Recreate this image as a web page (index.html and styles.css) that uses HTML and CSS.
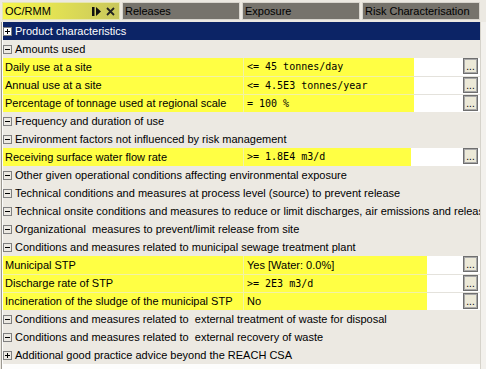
FILE: index.html
```html
<!doctype html>
<html lang="en">
<head>
    <meta charset="UTF-8">
    <title>OC/RMM</title>
    <link rel="stylesheet" href="styles.css">
</head>
<body>

<div class="tabs">
    <div class="tab active">
        <span>OC/RMM</span>
        <svg class="tab-icons" width="23" height="9" viewBox="0 0 23 9">
            <rect x="0" y="0" width="2.5" height="9" fill="#111"/>
            <path d="M4 0 L9 4.5 L4 9 Z" fill="#111"/>
            <path d="M15 1 L22 8 M22 1 L15 8" stroke="#222" stroke-width="1.8"/>
        </svg>
    </div>
    <div class="tab">Releases</div>
    <div class="tab">Exposure</div>
    <div class="tab">Risk Characterisation</div>
</div>

<div class="frame">
    <div class="tree">
        <div class="node head">
            <svg class="box" width="9" height="9" viewBox="0 0 9 9"><rect x="0.5" y="0.5" width="8" height="8" fill="#fff" stroke="#7f7f7f"/><path d="M2 4.5 H7 M4.5 2 V7" stroke="#000"/></svg>
            Product characteristics
        </div>
        <div class="node">
            <svg class="box" width="9" height="9" viewBox="0 0 9 9"><rect x="0.5" y="0.5" width="8" height="8" fill="none" stroke="#7f7f7f"/><path d="M2 4.5 H7" stroke="#000"/></svg>
            Amounts used
        </div>
        <div class="prop">
            <div class="label">Daily use at a site</div>
            <div class="value mono w1">&lt;= 45 tonnes/day</div>
            <div class="rest"><span class="dots">...</span></div>
        </div>
        <div class="prop">
            <div class="label">Annual use at a site</div>
            <div class="value mono w1">&lt;= 4.5E3 tonnes/year</div>
            <div class="rest"><span class="dots">...</span></div>
        </div>
        <div class="prop">
            <div class="label">Percentage of tonnage used at regional scale</div>
            <div class="value mono w1">= 100 %</div>
            <div class="rest"><span class="dots">...</span></div>
        </div>
        <div class="node">
            <svg class="box" width="9" height="9" viewBox="0 0 9 9"><rect x="0.5" y="0.5" width="8" height="8" fill="none" stroke="#7f7f7f"/><path d="M2 4.5 H7" stroke="#000"/></svg>
            Frequency and duration of use
        </div>
        <div class="node">
            <svg class="box" width="9" height="9" viewBox="0 0 9 9"><rect x="0.5" y="0.5" width="8" height="8" fill="none" stroke="#7f7f7f"/><path d="M2 4.5 H7" stroke="#000"/></svg>
            Environment factors not influenced by risk management
        </div>
        <div class="prop">
            <div class="label">Receiving surface water flow rate</div>
            <div class="value mono w2">&gt;= 1.8E4 m3/d</div>
            <div class="rest"><span class="dots">...</span></div>
        </div>
        <div class="node">
            <svg class="box" width="9" height="9" viewBox="0 0 9 9"><rect x="0.5" y="0.5" width="8" height="8" fill="none" stroke="#7f7f7f"/><path d="M2 4.5 H7" stroke="#000"/></svg>
            Other given operational conditions affecting environmental exposure
        </div>
        <div class="node">
            <svg class="box" width="9" height="9" viewBox="0 0 9 9"><rect x="0.5" y="0.5" width="8" height="8" fill="none" stroke="#7f7f7f"/><path d="M2 4.5 H7" stroke="#000"/></svg>
            Technical conditions and measures at process level (source) to prevent release
        </div>
        <div class="node">
            <svg class="box" width="9" height="9" viewBox="0 0 9 9"><rect x="0.5" y="0.5" width="8" height="8" fill="none" stroke="#7f7f7f"/><path d="M2 4.5 H7" stroke="#000"/></svg>
            <span class="clip">Technical onsite conditions and measures to reduce or limit discharges, air emissions and releas</span>
        </div>
        <div class="node">
            <svg class="box" width="9" height="9" viewBox="0 0 9 9"><rect x="0.5" y="0.5" width="8" height="8" fill="none" stroke="#7f7f7f"/><path d="M2 4.5 H7" stroke="#000"/></svg>
            Organizational &nbsp;measures to prevent/limit release from site
        </div>
        <div class="node">
            <svg class="box" width="9" height="9" viewBox="0 0 9 9"><rect x="0.5" y="0.5" width="8" height="8" fill="none" stroke="#7f7f7f"/><path d="M2 4.5 H7" stroke="#000"/></svg>
            Conditions and measures related to municipal sewage treatment plant
        </div>
        <div class="prop">
            <div class="label">Municipal STP</div>
            <div class="value w3">Yes [Water: 0.0%]</div>
            <div class="rest"><span class="dots">...</span></div>
        </div>
        <div class="prop">
            <div class="label">Discharge rate of STP</div>
            <div class="value mono w3">&gt;= 2E3 m3/d</div>
            <div class="rest"><span class="dots">...</span></div>
        </div>
        <div class="prop">
            <div class="label">Incineration of the sludge of the municipal STP</div>
            <div class="value w3">No</div>
            <div class="rest"><span class="dots">...</span></div>
        </div>
        <div class="node">
            <svg class="box" width="9" height="9" viewBox="0 0 9 9"><rect x="0.5" y="0.5" width="8" height="8" fill="none" stroke="#7f7f7f"/><path d="M2 4.5 H7" stroke="#000"/></svg>
            Conditions and measures related to &nbsp;external treatment of waste for disposal
        </div>
        <div class="node">
            <svg class="box" width="9" height="9" viewBox="0 0 9 9"><rect x="0.5" y="0.5" width="8" height="8" fill="none" stroke="#7f7f7f"/><path d="M2 4.5 H7" stroke="#000"/></svg>
            Conditions and measures related to &nbsp;external recovery of waste
        </div>
        <div class="node">
            <svg class="box" width="9" height="9" viewBox="0 0 9 9"><rect x="0.5" y="0.5" width="8" height="8" fill="none" stroke="#7f7f7f"/><path d="M2 4.5 H7 M4.5 2 V7" stroke="#000"/></svg>
            Additional good practice advice beyond the REACH CSA
        </div>
    </div>
    <div class="scroll"></div>
</div>

</body>
</html>
```

FILE: styles.css
```css
body {
    margin: 0;
    width: 486px;
    height: 369px;
    overflow: hidden;
    background-color: #ece9e2;
    font-family: "Liberation Sans", Arial, sans-serif;
    font-size: 11px;
    color: #000;
}

/* tabs */
.tabs {
    display: flex;
    gap: 2px;
    height: 22px;
    padding: 2px 0 0 2px;
    box-sizing: border-box;
}

.tab {
    width: 118px;
    height: 18px;
    box-sizing: border-box;
    border: 1px solid #d8d5ce;
    background-color: #76736c;
    padding-left: 2px;
    line-height: 16px;
    white-space: nowrap;
    overflow: hidden;
}

.tab.active {
    display: flex;
    align-items: center;
    padding-right: 4px;
    border-color: #e6e6b0;
    background: linear-gradient(to right, #f6f64c, #c9c75c);
}

.tab-icons {
    margin-left: auto;
}

/* tree */
.frame {
    display: flex;
    height: 347px;
}

.tree {
    flex: 1;
    margin-left: 1px;
    border-left: 1px solid #9c9991;
    padding-left: 1px;
    background-color: #fdfdfc;
    overflow: hidden;
}

.scroll {
    width: 5px;
    border-left: 1px solid #d6d3cb;
    background-color: #f3f1ed;
}

.node {
    display: flex;
    align-items: center;
    height: 18px;
    line-height: 18px;
    background-color: #ece9e2;
    white-space: nowrap;
    overflow: hidden;
}

.node.head {
    background-color: #0c2466;
    color: #fff;
}

.box {
    flex: none;
    margin-right: 3px;
}

.prop {
    display: flex;
    height: 18px;
    line-height: 18px;
    box-sizing: border-box;
}

.prop + .prop {
    border-top: 1px solid #f2f2a6;
    line-height: 17px;
}

.label {
    width: 238px;
    padding-left: 2px;
    background-color: #ffff44;
    border-right: 1px solid #f2f2a6;
    white-space: nowrap;
    overflow: hidden;
}

.value {
    padding-left: 3px;
    background-color: #ffff44;
    white-space: nowrap;
    box-sizing: border-box;
}

.value.mono {
    font-family: "DejaVu Sans Mono", monospace;
    font-size: 10px;
}

.w1 { width: 170px; }
.w2 { width: 167px; }
.w3 { width: 183px; }

.rest {
    flex: 1;
    display: flex;
    justify-content: flex-end;
    align-items: flex-start;
    padding-right: 2px;
    background-color: #fff;
}

.prop + .prop .rest {
    box-shadow: 0 -1px 0 #e4e2dc;
}

.dots {
    width: 15px;
    height: 16px;
    box-sizing: border-box;
    border: 1px solid #6f6f6f;
    box-shadow: inset 0 0 0 1px #a9a9a9;
    background-color: #ece9d8;
    font-size: 10px;
    line-height: 14px;
    padding-top: 1px;
    text-align: center;
    overflow: hidden;
}
```
